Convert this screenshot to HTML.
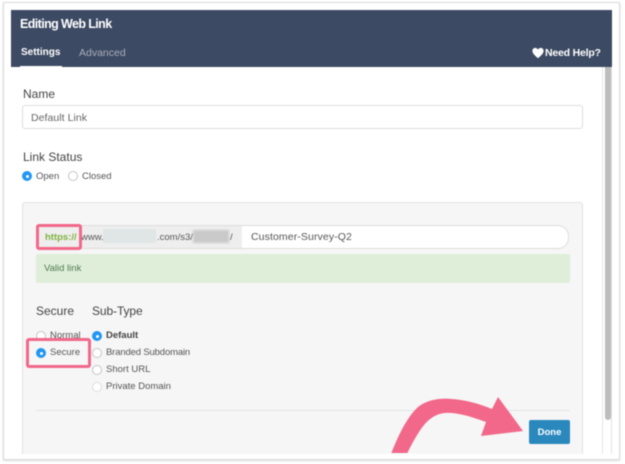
<!DOCTYPE html>
<html><head><meta charset="utf-8">
<style>
html,body{margin:0;padding:0;background:#fff;}
body{width:625px;height:464px;overflow:hidden;position:relative;font-family:"Liberation Sans",sans-serif;}
#w{position:absolute;left:0;top:0;width:625px;height:464px;filter:blur(0.4px);}
.a{position:absolute;white-space:nowrap;}
.t{position:absolute;white-space:nowrap;line-height:16px;color:#555;font-size:10.5px;}
.r{position:absolute;width:8px;height:8px;border-radius:50%;background:#fff;border:1px solid #c4c4c4;}
.on{background:#2196f3;border-color:#2196f3;}
.on:after{content:"";position:absolute;left:2.5px;top:2.5px;width:3px;height:3px;border-radius:50%;background:#fff;}
.h{font-size:12px;color:#444;}
</style></head><body><div id="w">
<div class="a" style="left:3px;top:2px;width:615px;height:456px;background:#fff;border:1px solid #d8d8d8;border-radius:1px;box-shadow:0 1px 2px #ddd;"></div>
<div class="a" style="left:11px;top:10px;width:590px;height:444px;background:#fff;"></div>
<div class="a" style="left:11px;top:10px;width:601px;height:57px;background:#3d4a63;"></div>
<div class="t" style="left:20px;top:16px;color:#fff;font-size:12.5px;font-weight:bold;letter-spacing:-.6px;">Editing Web Link</div>
<div class="t" style="left:21px;top:45px;color:#fff;font-size:10px;font-weight:bold;">Settings</div>
<div class="a" style="left:20px;top:66px;width:42px;height:2px;background:#fff;"></div>
<div class="t" style="left:79px;top:45px;color:#a8afbc;font-size:10.5px;">Advanced</div>
<svg class="a" style="left:532px;top:47px;" width="12" height="12" viewBox="0 0 12 12"><path d="M6 11.2 C4 9.4 .4 6.9 .4 3.9 C.4 2 1.8 .9 3.2 .9 C4.4 .9 5.4 1.5 6 2.6 C6.6 1.5 7.6 .9 8.8 .9 C10.2 .9 11.6 2 11.6 3.9 C11.6 6.9 8 9.4 6 11.2Z" fill="#fff"/></svg>
<div class="t" style="left:545px;top:45px;color:#fff;font-size:10.5px;font-weight:bold;letter-spacing:-.2px;">Need Help?</div>
<div class="a" style="left:602px;top:67px;width:1px;height:387px;background:#e4e4e4;"></div>
<div class="a" style="left:605px;top:67px;width:6px;height:353px;background:#bdbdbd;border-radius:0 0 3px 3px;"></div>
<div class="a" style="left:611px;top:67px;width:1px;height:387px;background:#e2e2e2;"></div>
<div class="t h" style="left:23px;top:86px;">Name</div>
<div class="a" style="left:22px;top:105px;width:559px;height:22px;background:#fff;border:1px solid #ddd;border-radius:3px;"></div>
<div class="t" style="left:31px;top:110px;color:#666;font-size:10.5px;letter-spacing:.05px;">Default Link</div>
<div class="t h" style="left:23px;top:149px;">Link Status</div>
<div class="r on" style="left:22px;top:171px;"></div>
<div class="t" style="left:36px;top:169px;font-size:9.5px;">Open</div>
<div class="r" style="left:68px;top:171px;"></div>
<div class="t" style="left:82px;top:169px;font-size:9.5px;">Closed</div>
<div class="a" style="left:22px;top:202px;width:559px;height:251px;background:#f6f6f6;border:1px solid #e2e2e2;border-bottom:0;border-radius:3px 3px 0 0;"></div>
<div class="a" style="left:36px;top:225px;width:206px;height:22px;background:#eee;border:1px solid #ddd;border-right:0;border-radius:3px 0 0 3px;"></div>
<div class="a" style="left:242px;top:225px;width:326px;height:22px;background:#fff;border:1px solid #ddd;border-left:0;border-radius:0 11px 11px 0;"></div>
<div class="t" style="left:45px;top:230px;color:#7fb33c;font-size:9.5px;font-weight:bold;">https://</div>
<div class="t" style="left:81px;top:230px;color:#555;font-size:9.5px;">www.</div>
<div class="a" style="left:103px;top:229px;width:53px;height:14px;background:#dfe6e5;"></div>
<div class="t" style="left:157px;top:230px;color:#555;font-size:9.5px;">.com/s3/</div>
<div class="a" style="left:193px;top:230px;width:36px;height:13px;background:#c9c9c9;filter:blur(1px);"></div>
<div class="t" style="left:230px;top:230px;color:#555;font-size:9.5px;">/</div>
<div class="t" style="left:251px;top:229px;color:#555;font-size:10.5px;letter-spacing:.1px;">Customer-Survey-Q2</div>
<div class="a" style="left:36px;top:254px;width:534px;height:29px;background:#dfeed9;border-radius:2px;"></div>
<div class="t" style="left:44px;top:261px;color:#4f7a50;font-size:9.5px;">Valid link</div>
<div class="t h" style="left:36px;top:303px;">Secure</div>
<div class="t h" style="left:92px;top:303px;letter-spacing:-.1px;">Sub-Type</div>
<div class="r" style="left:36px;top:331px;"></div>
<div class="t" style="left:50px;top:328px;font-size:9.5px;">Normal</div>
<div class="r on" style="left:36px;top:348px;"></div>
<div class="t" style="left:50px;top:345px;font-size:9.5px;">Secure</div>
<div class="r on" style="left:92px;top:331px;"></div>
<div class="t" style="left:106px;top:328px;font-size:9.5px;font-weight:bold;color:#444;">Default</div>
<div class="r" style="left:92px;top:348px;"></div>
<div class="t" style="left:106px;top:345px;font-size:9.5px;letter-spacing:-.15px;">Branded Subdomain</div>
<div class="r" style="left:92px;top:365px;"></div>
<div class="t" style="left:106px;top:362px;font-size:9.5px;">Short URL</div>
<div class="r" style="left:92px;top:382px;border-color:#ddd;"></div>
<div class="t" style="left:106px;top:379px;font-size:9.5px;">Private Domain</div>
<div class="a" style="left:36px;top:410px;width:534px;height:1px;background:#e4e4e4;"></div>
<div class="a" style="left:529px;top:420px;width:41px;height:24px;background:#2a88bd;border-radius:2px;"></div>
<div class="t" style="left:529px;top:425px;width:41px;text-align:center;color:#fff;font-size:9.5px;font-weight:bold;">Done</div>
<div class="a" style="left:36px;top:224px;width:40px;height:20px;border:3px solid #f2688a;border-radius:3px;"></div>
<div class="a" style="left:26px;top:338px;width:59px;height:24px;border:3px solid #f2688a;border-radius:3px;"></div>
<svg class="a" style="left:0;top:0;" width="625" height="453" viewBox="0 0 625 453"><path d="M391 454 C398 436 407 417 418 407 C428 399 442 398 452 399 C466 400 480 404 492 409 L498 397 L523 431 L481 436 L486 422 C470 416 455 412 445 413 C434 414 426 421 419 432 C414 440 410 447 407 454 Z" fill="#f2688a"/></svg>
</div></body></html>
